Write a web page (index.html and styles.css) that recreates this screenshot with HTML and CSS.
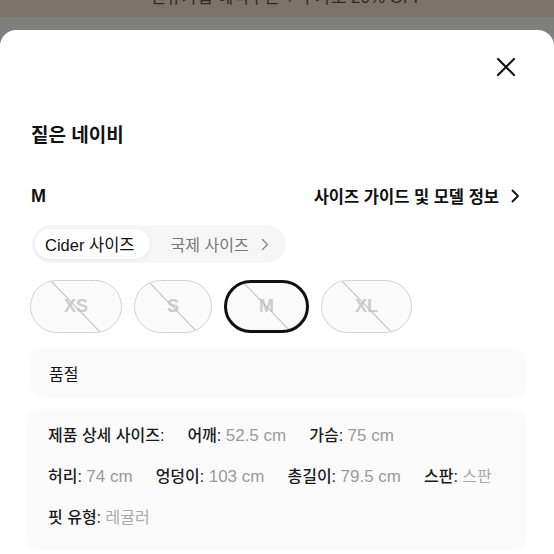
FILE: index.html
```html
<!DOCTYPE html>
<html lang="ko">
<head>
<meta charset="utf-8">
<link rel="stylesheet" href="styles.css">
</head>
<body>
<div class="banner"><div class="banner-text">신규가입 혜택쿠폰 + 추가로 20% OFF</div></div>
<div class="scrim"></div>
<div class="sheet">
  <div class="close-row">
    <svg class="close" width="20" height="20" viewBox="0 0 20 20"><path d="M2 2 L18 18 M18 2 L2 18" stroke="#111" stroke-width="2.2" stroke-linecap="round"/></svg>
  </div>
  <div class="title">짙은 네이비</div>
  <div class="size-row">
    <span class="size-sel">M</span>
    <span class="guide">사이즈 가이드 및 모델 정보
      <svg width="9" height="14" viewBox="0 0 9 14"><path d="M1.5 1.5 L7 7 L1.5 12.5" fill="none" stroke="#111" stroke-width="1.8" stroke-linecap="round" stroke-linejoin="round"/></svg>
    </span>
  </div>
  <div class="tabs">
    <span class="tab active">Cider 사이즈</span>
    <span class="tab">국제 사이즈
      <svg width="8" height="13" viewBox="0 0 8 13"><path d="M1.5 1.5 L6.5 6.5 L1.5 11.5" fill="none" stroke="#888" stroke-width="1.4" stroke-linecap="round" stroke-linejoin="round"/></svg>
    </span>
  </div>
  <div class="sizes">
    <span class="pill">XS</span>
    <span class="pill pill-s">S</span>
    <span class="pill selected">M</span>
    <span class="pill">XL</span>
  </div>
  <div class="soldout">품절</div>
  <div class="details">
    <div class="drow">
      <span class="item"><b>제품 상세 사이즈:</b></span>
      <span class="item"><b>어깨:</b> <i>52.5 cm</i></span>
      <span class="item"><b>가슴:</b> <i>75 cm</i></span>
    </div>
    <div class="drow">
      <span class="item"><b>허리:</b> <i>74 cm</i></span>
      <span class="item"><b>엉덩이:</b> <i>103 cm</i></span>
      <span class="item"><b>총길이:</b> <i>79.5 cm</i></span>
      <span class="item"><b>스판:</b> <i class="ko">스판</i></span>
    </div>
    <div class="drow">
      <span class="item"><b>핏 유형:</b> <i class="ko">레귤러</i></span>
    </div>
  </div>
</div>
</body>
</html>
```

FILE: styles.css
```css
* { box-sizing: border-box; }
html, body { margin: 0; padding: 0; }
body {
  width: 554px;
  height: 554px;
  overflow: hidden;
  background: #807f7b;
  font-family: "Liberation Sans", "Noto Sans CJK KR", sans-serif;
  color: #111;
}
.banner {
  height: 17px;
  background: #7b7369;
  overflow: hidden;
  text-align: center;
}
.banner-text {
  margin-top: -13px;
  font-size: 17px;
  line-height: 22px;
  color: #2e2a26;
  padding-left: 20px;
}
.scrim {
  height: 13px;
  background: #7f807c;
}
.sheet {
  background: #fff;
  border-radius: 16px 16px 0 0;
  height: 540px;
  padding: 0 29px 0 30px;
}
.close-row {
  display: flex;
  justify-content: flex-end;
  padding-top: 27px;
  padding-right: 9px;
  height: 47px;
}
.close { display: block; width: 20px; height: 20px; }
.title {
  margin-top: 46px;
  font-size: 19px;
  line-height: 26px;
  font-weight: 600;
  padding-left: 1px;
}
.size-row {
  margin-top: 35px;
  display: flex;
  justify-content: space-between;
  align-items: center;
  height: 24px;
}
.size-sel {
  font-size: 18px;
  font-weight: 700;
  padding-left: 1px;
}
.guide {
  display: flex;
  align-items: center;
  gap: 12px;
  font-size: 16.5px;
  font-weight: 600;
  padding-right: 5px;
}
.guide svg { display: block; }
.tabs {
  margin-top: 17px;
  display: inline-flex;
  align-items: center;
  height: 38px;
  padding: 0 17px 0 3px;
  margin-left: 2px;
  background: #f6f6f6;
  border-radius: 19px;
}
.tab {
  display: flex;
  align-items: center;
  gap: 12px;
  font-size: 16px;
  color: #777;
  padding-left: 21px;
}
.tab.active {
  height: 30px;
  padding: 0 15px 0 10px;
  background: #fff;
  color: #111;
  border-radius: 15px;
  box-shadow: 0 1px 4px rgba(0,0,0,0.07);
  font-size: 16.5px;
}
.sizes {
  margin-top: 17px;
  display: flex;
  gap: 12px;
}
.pill {
  position: relative;
  overflow: hidden;
  height: 53px;
  padding: 0 33px;
  display: flex;
  align-items: center;
  justify-content: center;
  border: 1.5px solid #d2d2d2;
  border-radius: 27px;
  background: #fafafa;
  color: #cdcdcd;
  font-size: 18px;
  font-weight: 700;
}
.pill-s { padding: 0 32px; }
.pill::after {
  content: "";
  position: absolute;
  left: 50%;
  top: 50%;
  width: 76px;
  height: 1px;
  background: #bdbdbd;
  transform: translate(-50%, -50%) rotate(46deg);
}
.pill.selected {
  border: 3px solid #111;
  padding: 0 32px;
}
.soldout {
  margin-top: 16px;
  height: 47px;
  display: flex;
  align-items: center;
  padding-left: 17px;
  background: #fafafa;
  border-radius: 10px;
  box-shadow: 0 1px 6px rgba(0,0,0,0.04);
  font-size: 16px;
  margin-left: 2px;
}
.details {
  margin-top: 14px;
  margin-left: -2px;
  padding: 15px 20px 19px 20px;
  background: #fafafa;
  border-radius: 10px;
  box-shadow: 0 1px 6px rgba(0,0,0,0.04);
  display: flex;
  flex-direction: column;
  gap: 19px;
}
.drow {
  display: flex;
  gap: 23px;
  font-size: 16px;
  line-height: 22px;
  white-space: nowrap;
}
.item b { font-weight: 500; color: #1a1a1a; }
.item i { font-style: normal; color: #9a9a9a; font-size: 17px; }
.item i.ko { font-size: 16px; color: #aaa; }
```
